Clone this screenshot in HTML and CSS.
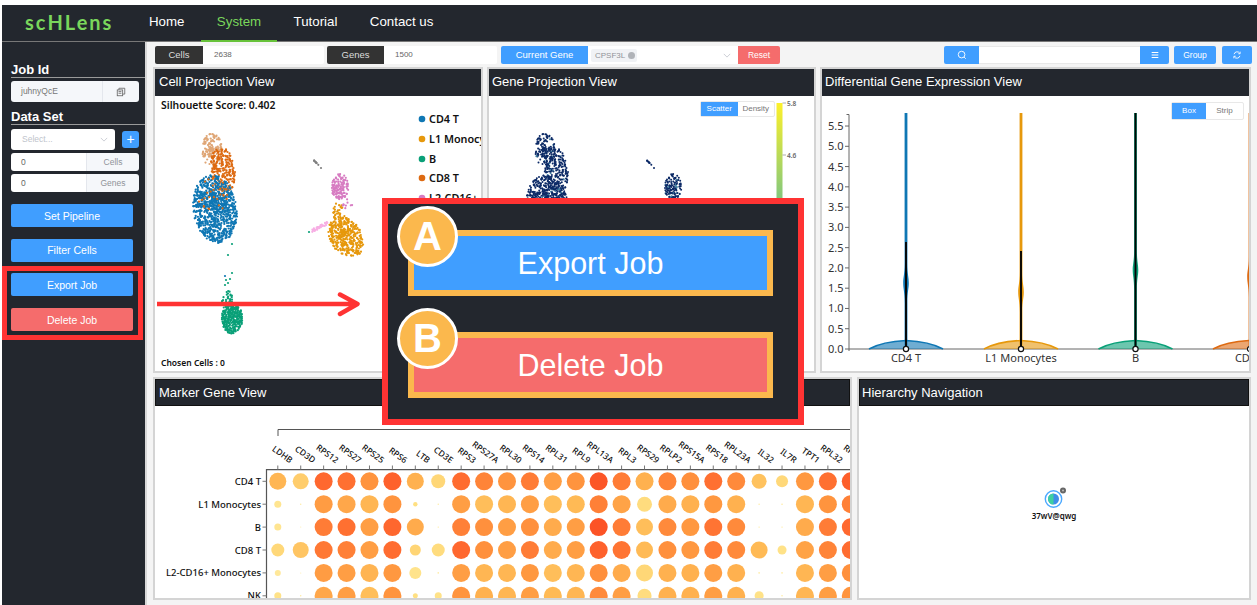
FILE: index.html
```html
<!DOCTYPE html>
<html lang="en">
<head>
<meta charset="utf-8">
<title>scHLens</title>
<link rel="stylesheet" href="styles.css">
</head>
<body>
<div class="app">
  <header class="header">
    <div class="logo">scHLens</div>
    <nav class="nav">
      <a class="nav-item">Home</a>
      <a class="nav-item active">System</a>
      <a class="nav-item">Tutorial</a>
      <a class="nav-item">Contact us</a>
    </nav>
  </header>
  <div class="workspace">
    <aside class="sidebar">
      <h2 class="side-title first">Job Id</h2>
      <div class="group job-group">
        <span class="group-input muted-dark">juhnyQcE</span>
        <span class="group-addon copy-addon">
          <svg class="icon-copy" viewBox="0 0 12 12"><rect x="1.5" y="3.5" width="6.5" height="7" fill="none" stroke="#666" stroke-width="1"/><path d="M3.5 3.5V1.5H10.5V8.5H8M3 5.500H6.500M3 7.500H6.500" fill="none" stroke="#666" stroke-width="1"/></svg>
        </span>
      </div>
      <h2 class="side-title">Data Set</h2>
      <div class="select-row">
        <div class="select">
          <span>Select...</span>
          <svg class="chev" viewBox="0 0 10 6"><path d="M1 1L5 5L9 1" fill="none" stroke="#c0c4cc" stroke-width="1"/></svg>
        </div>
        <button class="plus">+</button>
      </div>
      <div class="group count-group"><span class="group-input">0</span><span class="group-addon">Cells</span></div>
      <div class="group count-group"><span class="group-input">0</span><span class="group-addon">Genes</span></div>
      <div class="actions">
        <button class="action blue">Set Pipeline</button>
        <button class="action blue">Filter Cells</button>
        <button class="action blue">Export Job</button>
        <button class="action red">Delete Job</button>
      </div>
    </aside>
    <main class="main">
      <div class="toolbar">
        <span class="tb-label cells">Cells</span><span class="tb-value cells-v">2638</span>
        <span class="tb-label genes">Genes</span><span class="tb-value genes-v">1500</span>
        <span class="tb-blue current">Current Gene</span>
        <div class="gene-select">
          <span class="tag">CPSF3L<i class="tag-x"></i></span>
          <svg class="chev" viewBox="0 0 10 6"><path d="M1 1L5 5L9 1" fill="none" stroke="#c0c4cc" stroke-width="1"/></svg>
        </div>
        <span class="tb-red">Reset</span>
        <span class="tb-blue search">
          <svg class="icon" viewBox="0 0 12 12"><circle cx="5.500" cy="5.500" r="4" fill="none" stroke="#fff" stroke-width="1.100"/><path d="M8.500 8.500L10.500 10.500" stroke="#fff" stroke-width="1.100"/></svg>
        </span>
        <span class="tb-input"></span>
        <span class="tb-blue menu">
          <svg class="icon" viewBox="0 0 12 12"><path d="M2 3H10M2 6H10M2 9H10" stroke="#fff" stroke-width="1.400"/></svg>
        </span>
        <span class="tb-blue group-btn">Group</span>
        <span class="tb-blue refresh">
          <svg class="icon" viewBox="0 0 12 12"><path d="M2.500 5A3.700 3.700 0 0 1 9.300 4M9.500 7A3.700 3.700 0 0 1 2.700 8" fill="none" stroke="#fff" stroke-width="1.100"/><path d="M9.800 2V4.500H7.500M2.200 10V7.500H4.500" fill="none" stroke="#fff" stroke-width="1"/></svg>
        </span>
      </div>
      <div class="row top-row">
        <section class="panel p-cell">
          <h3 class="panel-title">Cell Projection View</h3>
          <div class="panel-body"><svg id="cellChart" class="chart" viewBox="155 96 326 275"></svg></div>
        </section>
        <section class="panel p-gene">
          <h3 class="panel-title">Gene Projection View</h3>
          <div class="panel-body">
            <svg id="geneChart" class="chart" viewBox="489 96 325 275"></svg>
            <div class="toggle gene-toggle"><span class="on">Scatter</span><span>Density</span></div>
          </div>
        </section>
        <section class="panel p-diff">
          <h3 class="panel-title">Differential Gene Expression View</h3>
          <div class="panel-body">
            <svg id="diffChart" class="chart" viewBox="822 96 427 275"></svg>
            <div class="toggle diff-toggle"><span class="on">Box</span><span>Strip</span></div>
          </div>
        </section>
      </div>
      <div class="row bottom-row">
        <section class="panel p-marker">
          <h3 class="panel-title">Marker Gene View</h3>
          <div class="panel-body"><svg id="markerChart" class="chart" viewBox="155 406 695 192"></svg></div>
        </section>
        <section class="panel p-hier">
          <h3 class="panel-title">Hierarchy Navigation</h3>
          <div class="panel-body">
            <svg class="chart" viewBox="859 406 390 192">
              <circle cx="1053.500" cy="499" r="8.200" fill="none" stroke="#4aa8ff" stroke-width="1.400"/>
              <circle cx="1053.500" cy="499" r="5.500" fill="#3f8ee8"/>
              <path d="M1053.500 493.500A5.500 5.500 0 0 0 1053.500 504.500Z" fill="#3fd0a0"/>
              <circle cx="1063" cy="490.500" r="3" fill="#666"/>
              <circle cx="1063" cy="490.500" r="1" fill="#bbb"/>
              <text class="node-label" x="1054" y="519" text-anchor="middle">37wV@qwg</text>
            </svg>
          </div>
        </section>
      </div>
    </main>
  </div>

  <div class="mark-box"></div>
  <svg class="arrow" viewBox="0 0 206 28"><path d="M0 14H199M183 4.500L200.500 14L183 24" fill="none" stroke="#ff3333" stroke-width="4.500" stroke-linecap="round" stroke-linejoin="round"/></svg>
  <div class="callout">
    <div class="callout-btn co-blue"><span class="badge">A</span>Export Job</div>
    <div class="callout-btn co-red"><span class="badge">B</span>Delete Job</div>
  </div>
</div>
<script src="script.js"></script>
</body>
</html>
```
FILE: styles.css
```css
* { box-sizing: border-box; }
html, body { margin: 0; height: 100%; background: #fff; overflow: hidden; }
.app {
  position: relative;
  width: 1257px;
  height: 605px;
  padding: 5px 0 0 2px;
  display: flex;
  flex-direction: column;
  font-family: "Liberation Sans", Arial, sans-serif;
  overflow: hidden;
}

/* header */
.header {
  height: 37px;
  flex: none;
  display: flex;
  background: #23272e;
  border-bottom: 1px solid #777;
}
.logo {
  width: 131px;
  padding: 5px 0 0 23px;
  color: #7ad65c;
  font: 700 20px/24px Lato, sans-serif;
  letter-spacing: 2px;
}
.nav { display: flex; height: 37px; }
.nav-item {
  padding: 0 16.200px;
  line-height: 34px;
  color: #fff;
  font-size: 13.300px;
}
.nav-item:first-child { padding-left: 16px; }
.nav-item.active { color: #7ad65c; border-bottom: 2px solid #67c23a; height: 37px; }

/* layout */
.workspace { flex: 1; display: flex; min-height: 0; }
.sidebar {
  width: 145px;
  flex: none;
  background: #23272e;
  border-right: 2px solid #d8d8d8;
  padding-left: 9px;
  display: flex;
  flex-direction: column;
}
.main {
  flex: 1;
  min-width: 0;
  background: #f4f4f4;
  padding: 4px 0 0 6px;
}

/* sidebar */
.side-title {
  margin: 0 0 3px;
  height: 18px;
  padding-top: 2px;
  font-size: 13px;
  line-height: 15px;
  color: #fff;
  font-weight: 700;
  border-bottom: 1.500px solid #9a9a9a;
}
.side-title.first { margin-top: 18px; }
.side-title:not(.first) { margin-top: 5px; margin-bottom: 4px; }
.group {
  width: 128px;
  display: flex;
  border-radius: 3px;
  overflow: hidden;
  font-size: 8.500px;
}
.group-input { flex: 1; background: #fff; color: #666; padding-left: 10px; }
.group-addon { background: #f5f7fa; color: #909399; text-align: center; border-left: 1px solid #e4e7ed; }
.job-group { height: 21px; line-height: 21px; }
.job-group .group-input { background: #f5f7fa; color: #777; }
.copy-addon { width: 37px; display: flex; align-items: center; justify-content: center; }
.icon-copy { width: 10px; height: 10px; }
.select-row { display: flex; align-items: center; height: 21px; margin-bottom: 3px; }
.select {
  width: 104px;
  height: 21px;
  background: #fff;
  border-radius: 3px;
  color: #c0c4cc;
  font-size: 8.500px;
  line-height: 21px;
  padding: 0 7px 0 11px;
  display: flex;
  justify-content: space-between;
  align-items: center;
}
.chev { width: 8px; height: 5px; }
.plus {
  margin-left: 7px;
  width: 17px;
  height: 17px;
  padding: 0;
  border: 0;
  border-radius: 3px;
  background: #409eff;
  color: #fff;
  font: 14px/17px "Liberation Sans", sans-serif;
}
.count-group { height: 18px; line-height: 18px; margin-bottom: 3px; }
.count-group .group-addon { width: 53px; }
.actions { margin-top: 9px; width: 122px; display: flex; flex-direction: column; gap: 11.700px; }
.action {
  height: 23px;
  border: 0;
  border-radius: 2px;
  padding: 0;
  color: #fff;
  font: 10.500px "Liberation Sans", sans-serif;
}
.blue { background: #409eff; }
.red { background: #f56c6c; }

/* toolbar */
.toolbar { height: 18px; display: flex; margin-left: 2px; font-size: 9.500px; line-height: 18px; margin-bottom: 3px; }
.tb-label { background: #333; color: #ddd; text-align: center; border-radius: 2px 0 0 2px; }
.tb-value { background: #fff; color: #666; font-size: 8px; border-radius: 0 2px 2px 0; padding-left: 11px; }
.cells { width: 48px; }
.cells-v { width: 121px; margin-right: 3px; }
.genes { width: 57px; }
.genes-v { width: 113px; margin-right: 4px; }
.tb-blue { background: #409eff; color: #fff; text-align: center; border-radius: 2px; display: flex; align-items: center; justify-content: center; flex: none; }
.current { width: 87px; border-radius: 2px 0 0 2px; }
.gene-select { width: 150px; background: #fff; display: flex; align-items: center; justify-content: space-between; padding: 0 7px 0 3px; }
.tag { background: #f0f2f5; color: #909399; font-size: 8px; line-height: 13px; height: 13px; padding: 0 2px 0 4px; border-radius: 2px; display: flex; align-items: center; gap: 3px; }
.tag-x { width: 7px; height: 7px; border-radius: 50%; background: #b0b3b8; }
.tb-red { width: 42px; background: #f56c6c; color: #fff; text-align: center; font-size: 8.500px; border-radius: 0 2px 2px 0; }
.search { width: 35px; margin-left: 164px; border-radius: 2px 0 0 2px; }
.tb-input { width: 161px; background: #fff; border-top: 1px solid #e8e8e8; border-bottom: 1px solid #e8e8e8; }
.menu { width: 29px; border-radius: 0 2px 2px 0; margin-right: 5px; }
.group-btn { width: 42px; margin-right: 6px; font-size: 8.500px; }
.refresh { width: 30px; }
.icon { width: 10px; height: 10px; }

/* panels */
.row { display: flex; width: 1098px; }
.top-row { height: 306px; gap: 4px; margin-bottom: 4px; }
.bottom-row { height: 223px; gap: 5px; }
.panel { display: flex; flex-direction: column; border: 2px solid #d4d4d4; background: #fff; min-width: 0; }
.p-cell { width: 330px; }
.p-gene { width: 329px; }
.p-diff { width: 431px; }
.p-marker { width: 699px; }
.p-hier { width: 394px; }
.panel-title {
  margin: 0;
  height: 27px;
  flex: none;
  padding-left: 4px;
  background: #23272e;
  color: #fff;
  font-size: 13px;
  font-weight: 400;
  line-height: 25px;
}
.p-gene .panel-title, .p-diff .panel-title, .p-hier .panel-title { padding-left: 3px; }
.bottom-row .panel-title { border: 1px solid #111; padding-left: 3px; }
.p-hier.panel .panel-title { padding-left: 2px; }
.panel-body { position: relative; flex: 1; min-height: 0; overflow: hidden; }
.chart { display: block; width: 100%; height: 100%; }
.chart text { font-family: "Noto Sans", sans-serif; fill: #111; }
.chart .score { font-size: 10.400px; font-weight: 600; }
.chart .chosen { font-size: 8.500px; font-weight: 600; }
.chart .legend { font-size: 10.800px; font-weight: 600; }
.chart .cbar { font-size: 6.500px; fill: #666; font-weight: 600; }
.chart .axis { font-size: 11px; fill: #333; }
.chart .gene { font-size: 8.500px; font-weight: 500; }
.chart .rowname { font-size: 9.500px; font-weight: 500; }
.chart .node-label { font-size: 8px; font-weight: 600; }
.toggle {
  position: absolute;
  display: flex;
  background: #fff;
  color: #777;
  font-size: 8px;
  border: 1px solid #e8e8e8;
  border-radius: 2px;
}
.toggle span { text-align: center; }
.toggle .on { background: #409eff; color: #fff; }
.gene-toggle { top: 5px; right: 39px; height: 16px; line-height: 14px; }
.gene-toggle span { width: 36.500px; }
.diff-toggle { top: 6px; right: 5px; height: 18px; line-height: 16px; }
.diff-toggle span { width: 34px; }
.diff-toggle span + span { width: 37px; }

/* annotation layer */
.mark-box {
  position: absolute;
  left: 2px;
  top: 266px;
  width: 141px;
  height: 74px;
  border: 5px solid #ff3333;
}
.arrow { position: absolute; left: 157px; top: 290px; width: 206px; height: 28px; }
.callout {
  position: absolute;
  left: 382px;
  top: 198px;
  width: 422px;
  height: 227px;
  background: #23272e;
  border: 6px solid #ff3333;
  padding: 26px 0 0 20px;
  display: flex;
  flex-direction: column;
  gap: 36px;
}
.callout-btn {
  position: relative;
  width: 365px;
  height: 66px;
  border: 6px solid #fbb84d;
  color: #fff;
  font-size: 30.500px;
  line-height: 54px;
  text-align: center;
}
.co-blue { background: #409eff; }
.co-red { background: #f56c6c; }
.badge {
  position: absolute;
  left: -17px;
  top: -30px;
  width: 61px;
  height: 61px;
  border-radius: 50%;
  background: #fbb84d;
  border: 3px solid #fff;
  font-size: 40px;
  font-weight: 700;
  line-height: 55px;
  text-align: center;
}
```
FILE: script.js
```js
(function () {
  var NS = 'http://www.w3.org/2000/svg';
  var seed = 12345;
  function rnd() {
    seed = (seed + 0x6D2B79F5) | 0;
    var t = Math.imul(seed ^ (seed >>> 15), 1 | seed);
    t = (t + Math.imul(t ^ (t >>> 7), 61 | t)) ^ t;
    return ((t ^ (t >>> 14)) >>> 0) / 4294967296;
  }
  function el(parent, name, attrs, text) {
    var e = document.createElementNS(NS, name);
    for (var k in attrs) e.setAttribute(k, attrs[k]);
    if (text !== undefined) e.textContent = text;
    parent.appendChild(e);
    return e;
  }
  function blob(c) {
    var pts = [];
    for (var i = 0; i < c.n; i++) {
      var a = rnd() * Math.PI * 2;
      var r = Math.pow(rnd(), c.p || 0.56);
      var dy = Math.sin(a) * r * c.ry;
      pts.push([c.x + Math.cos(a) * r * c.rx + (c.skew || 0) * dy, c.y + dy, c.c]);
    }
    return pts;
  }

  var TAN = '#dfa676', ORANGE = '#dd6a12', BLUE = '#0f77b4', GREEN = '#0aa078',
      PINK = '#d77cc2', GOLD = '#e6980c', LPINK = '#f7aee4', GREY = '#808080';
  var clusters = [
    { x: 212, y: 150, rx: 10, ry: 17, n: 130, c: TAN },
    { x: 223, y: 170, rx: 12, ry: 23, n: 230, c: ORANGE, skew: 0.1 },
    { x: 215, y: 209, rx: 22, ry: 34, n: 850, c: BLUE, skew: 0.08 },
    { x: 213, y: 196, rx: 17, ry: 18, n: 30, c: ORANGE },
    { x: 232, y: 318, rx: 10.500, ry: 15.500, n: 300, c: GREEN },
    { x: 228, y: 302, rx: 6, ry: 11, n: 50, c: GREEN },
    { x: 346, y: 237, rx: 17, ry: 20, n: 380, c: GOLD, skew: 0.25 },
    { x: 339, y: 212, rx: 6, ry: 10, n: 36, c: GOLD },
    { x: 340, y: 187, rx: 8.500, ry: 13.500, n: 130, c: PINK },
    { x: 345, y: 205, rx: 8, ry: 8, n: 9, c: PINK }
  ];

  var cell = document.getElementById('cellChart');
  var allPts = [];
  clusters.forEach(function (c) { allPts = allPts.concat(blob(c)); });
  // thin streaks and stray cells
  for (var i = 0; i < 34; i++) {
    var t = rnd();
    allPts.push([312 + 15 * t + rnd() - 0.5, 230.500 - 7 * t + rnd() * 3 - 1.500, LPINK]);
  }
  for (i = 0; i < 9; i++) {
    var g = rnd();
    allPts.push([314 + 6 * g, 160.500 + 6 * g, GREY]);
  }
  allPts.push([321, 168, GREY], [309, 232, GREEN], [232, 244, GREEN], [228, 255, GREEN], [232, 273, GREEN],
    [225, 276, BLUE], [230, 279, GREEN], [226, 280, GREEN], [225, 285, GREEN], [228, 283, GREEN]);
  allPts.forEach(function (p) {
    el(cell, 'circle', { cx: p[0].toFixed(1), cy: p[1].toFixed(1), r: 1.100, fill: p[2] });
  });
  el(cell, 'text', { class: 'score', x: 161, y: 109 }, 'Silhouette Score: 0.402');
  el(cell, 'text', { class: 'chosen', x: 161, y: 366 }, 'Chosen Cells : 0');
  [['CD4 T', BLUE, 119], ['L1 Monocytes', GOLD, 139], ['B', GREEN, 159],
   ['CD8 T', ORANGE, 178], ['L2-CD16+ Monocytes', PINK, 198]].forEach(function (l) {
    el(cell, 'circle', { cx: 422, cy: l[2], r: 3.300, fill: l[1] });
    el(cell, 'text', { class: 'legend', x: 429, y: l[2] + 4 }, l[0]);
  });

  var gene = document.getElementById('geneChart');
  allPts.forEach(function (p) {
    el(gene, 'circle', { cx: (p[0] + 333).toFixed(1), cy: p[1].toFixed(1), r: 1,
      fill: rnd() < 0.06 ? '#3f7f9f' : '#0c2a66' });
  });
  var defs = el(gene, 'defs', {});
  var grad = el(defs, 'linearGradient', { id: 'cb', x1: 0, y1: 0, x2: 0, y2: 1 });
  el(grad, 'stop', { offset: 0, 'stop-color': '#fdf02a' });
  el(grad, 'stop', { offset: 1, 'stop-color': '#0aa0d0' });
  el(gene, 'rect', { x: 776.500, y: 103, width: 6, height: 190, fill: 'url(#cb)' });
  [['5.8', 103], ['4.6', 155]].forEach(function (t) {
    el(gene, 'path', { d: 'M782.500 ' + t[1] + 'H786', stroke: '#999', 'stroke-width': 0.8 });
    el(gene, 'text', { class: 'cbar', x: 787, y: t[1] + 2.500 }, t[0]);
  });

  var diff = document.getElementById('diffChart');
  var ticks = ['0.0', '0.5', '1.0', '1.5', '2.0', '2.5', '3.0', '3.5', '4.0', '4.5', '5.0', '5.5'];
  el(diff, 'path', { d: 'M849 114.500H846.500M849 114.500V351M849 349H1249', fill: 'none', stroke: '#666', 'stroke-width': 1 });
  ticks.forEach(function (t, i) {
    var y = 349 - i * 20.270;
    el(diff, 'path', { d: 'M845 ' + y + 'H849', stroke: '#666', 'stroke-width': 1 });
    el(diff, 'text', { class: 'axis', x: 843.500, y: y + 4, 'text-anchor': 'end' }, t);
  });
  [[906, BLUE, 242, 283, 'CD4 T'], [1021, GOLD, 251, 292, 'L1 Monocytes'],
   [1135.500, GREEN, 113, 270, 'B'], [1250, ORANGE, 243, 277, 'CD8 T']].forEach(function (v) {
    var x = v[0], b = v[3];
    var dome = 'M' + (x - 37) + ' 349C' + (x - 27) + ' 343.500 ' + (x - 12) + ' 341 ' + x + ' 340.500C' + (x + 12) + ' 341 ' + (x + 27) + ' 343.500 ' + (x + 37) + ' 349';
    el(diff, 'path', { d: dome + 'Z', fill: v[1], 'fill-opacity': 0.6 });
    el(diff, 'path', { d: dome, fill: 'none', stroke: v[1], 'stroke-width': 1.600 });
    el(diff, 'path', {
      d: 'M' + (x - 1.400) + ' 113H' + (x + 1.400) + 'V' + (b - 20) +
         'C' + (x + 1.400) + ' ' + (b - 8) + ' ' + (x + 2.800) + ' ' + (b - 6) + ' ' + (x + 2.800) + ' ' + b +
         'C' + (x + 2.800) + ' ' + (b + 6) + ' ' + (x + 1.400) + ' ' + (b + 8) + ' ' + (x + 1.400) + ' ' + (b + 20) +
         'V349H' + (x - 1.400) + 'V' + (b + 20) +
         'C' + (x - 1.400) + ' ' + (b + 8) + ' ' + (x - 2.800) + ' ' + (b + 6) + ' ' + (x - 2.800) + ' ' + b +
         'C' + (x - 2.800) + ' ' + (b - 6) + ' ' + (x - 1.400) + ' ' + (b - 8) + ' ' + (x - 1.400) + ' ' + (b - 20) + 'Z',
      fill: v[1] });
    el(diff, 'path', { d: 'M' + x + ' ' + v[2] + 'V349', stroke: '#050505', 'stroke-width': 1.900 });
    el(diff, 'circle', { cx: x, cy: 349, r: 2.600, fill: '#fff', stroke: '#111', 'stroke-width': 1.200 });
    el(diff, 'text', { class: 'axis', x: x, y: 362, 'text-anchor': 'middle' }, v[4]);
  });

  var genes = ['LDHB', 'CD3D', 'RPS12', 'RPS27', 'RPS25', 'RPS6', 'LTB', 'CD3E', 'RPS3', 'RPS27A', 'RPL30', 'RPS14', 'RPL31', 'RPL9', 'RPL13A', 'RPL3', 'RPS29', 'RPLP2', 'RPS15A', 'RPS18', 'RPL23A', 'IL32', 'IL7R', 'TPT1', 'RPL32', 'RPL11'];
  var rows = ['CD4 T', 'L1 Monocytes', 'B', 'CD8 T', 'L2-CD16+ Monocytes', 'NK'];
  var radii = {
    0: [8.500, 3.500, 3.500, 6.500, 3, 3.500], 1: [8, .7, .5, 8, .5, .7],
    6: [8.500, 2.200, 8.500, 5.500, 6, 2.500], 7: [7, .7, .7, 6.500, .8, 3.500],
    16: [9, 7.500, 8.500, 8.500, 8.500, 7], 21: [7.500, .7, .7, 8.500, .8, 4.500],
    22: [6, .8, .7, 4.500, .8, .8]
  };
  var vals = [
    [.42,.15,.15,.24,.12,.18],[.3,.1,.1,.34,.1,.12],[.82,.56,.72,.74,.56,.5],[.78,.5,.78,.7,.55,.55],
    [.6,.42,.55,.55,.43,.38],[.86,.6,.83,.8,.58,.6],[.45,.2,.48,.26,.17,.2],[.25,.1,.1,.22,.1,.18],
    [.8,.55,.7,.82,.55,.6],[.68,.38,.62,.62,.42,.45],[.6,.42,.55,.55,.42,.42],[.72,.55,.62,.72,.58,.55],
    [.55,.38,.48,.48,.38,.4],[.6,.4,.55,.55,.42,.42],[.92,.7,.94,.86,.62,.65],[.72,.52,.72,.76,.48,.55],
    [.45,.22,.38,.4,.25,.22],[.68,.48,.65,.62,.45,.45],[.62,.45,.58,.58,.45,.45],[.78,.58,.76,.72,.55,.55],
    [.65,.45,.65,.65,.45,.45],[.36,.1,.1,.4,.1,.18],[.24,.1,.1,.18,.1,.1],[.58,.42,.48,.52,.42,.42],
    [.78,.6,.72,.68,.55,.55],[.88,.7,.82,.8,.62,.6]
  ];
  var stops = [[0, [255, 245, 190]], [.2, [255, 224, 130]], [.4, [255, 186, 85]], [.6, [255, 148, 62]], [.8, [255, 108, 48]], [1, [250, 72, 34]]];
  function color(v) {
    for (var i = 1; i < stops.length; i++) {
      if (v <= stops[i][0]) {
        var t = (v - stops[i - 1][0]) / (stops[i][0] - stops[i - 1][0]);
        var a = stops[i - 1][1], b = stops[i][1];
        return 'rgb(' + [0, 1, 2].map(function (k) { return Math.round(a[k] + (b[k] - a[k]) * t); }).join(',') + ')';
      }
    }
    return 'rgb(250,72,34)';
  }
  var m = document.getElementById('markerChart');
  var X0 = 277.800, DX = 22.920, Y0 = 481.300, DY = 22.900;
  el(m, 'path', { d: 'M278 436V429.500H860', fill: 'none', stroke: '#555', 'stroke-width': 1 });
  el(m, 'path', { d: 'M266.500 610V469.700H860', fill: 'none', stroke: '#555', 'stroke-width': 1.200 });
  genes.forEach(function (g, i) {
    var x = X0 + i * DX;
    el(m, 'path', { d: 'M' + x + ' 465.500V469.500', stroke: '#777', 'stroke-width': 1 });
    el(m, 'text', { class: 'gene', transform: 'translate(' + (x + 12) + ' 463.500) rotate(36)', x: 0, y: 0, 'text-anchor': 'end' }, g);
    rows.forEach(function (r, j) {
      var rad = radii[i] ? radii[i][j] : 9;
      el(m, 'circle', { cx: x, cy: Y0 + j * DY, r: rad, fill: color(vals[i][j]) });
    });
  });
  rows.forEach(function (r, j) {
    var y = Y0 + j * DY;
    el(m, 'path', { d: 'M262.500 ' + y + 'H266.500', stroke: '#777', 'stroke-width': 1 });
    el(m, 'text', { class: 'rowname', x: 261, y: y + 3.500, 'text-anchor': 'end' }, r);
  });
})();
```
